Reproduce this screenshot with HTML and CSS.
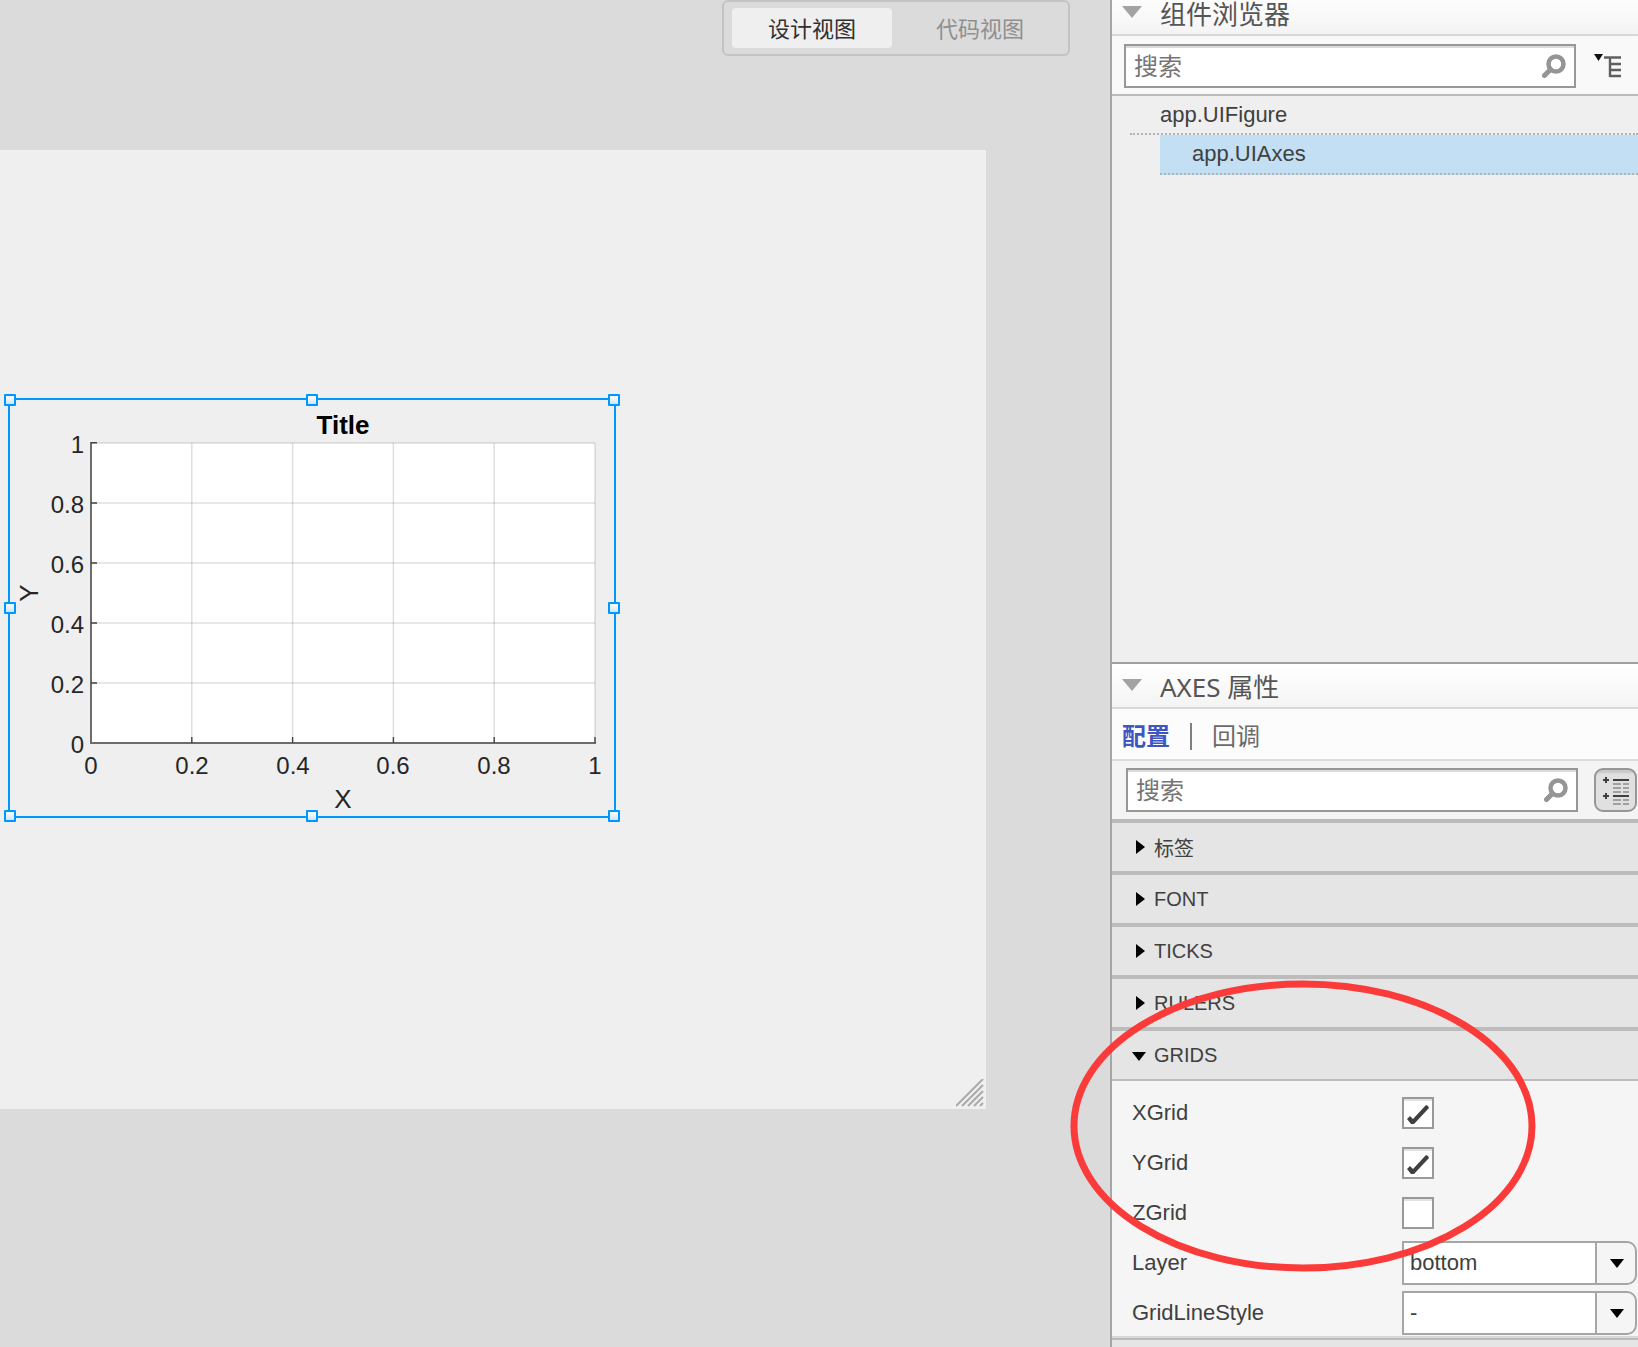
FILE: index.html
```html
<!DOCTYPE html>
<html lang="zh-CN">
<head>
<meta charset="utf-8">
<title>App Designer</title>
<link rel="stylesheet" href="styles.css">
</head>
<body>
<div class="app">
  <main class="workspace">
    <div class="view-switch">
      <button type="button" class="view-button view-button-active">设计视图</button>
      <button type="button" class="view-button">代码视图</button>
    </div>
    <div class="figure">
      <div class="axes">
        <svg class="plot" width="608" height="420" viewBox="8 398 608 420" role="img" aria-label="Title">
          <rect x="91" y="443" width="504" height="300" fill="#fff"/>
          <g stroke="#262626" stroke-opacity=".11" stroke-width="2">
            <path d="M92 443H595M92 503H595M92 563H595M92 623H595M92 683H595"/>
            <path stroke-opacity=".15" stroke-width="1.5" d="M191.800 443V742M292.600 443V742M393.400 443V742M494.200 443V742M595 443V742"/>
          </g>
          <path fill="none" stroke="#6c6c6c" stroke-width="2" d="M91 442V743H596"/>
          <path stroke="#444" stroke-width="1.4" d="M91 442.700H97M91 503H97M91 563H97M91 623H97M91 683H97M191.800 737V743M292.600 737V743M393.400 737V743M494.200 737V743M595 737V743"/>
          <g class="tick-text" text-anchor="end">
            <text x="84" y="453">1</text>
            <text x="84" y="513">0.8</text>
            <text x="84" y="573">0.6</text>
            <text x="84" y="633">0.4</text>
            <text x="84" y="693">0.2</text>
            <text x="84" y="753">0</text>
          </g>
          <g class="tick-text" text-anchor="middle">
            <text x="91" y="774">0</text>
            <text x="192" y="774">0.2</text>
            <text x="293" y="774">0.4</text>
            <text x="393" y="774">0.6</text>
            <text x="494" y="774">0.8</text>
            <text x="595" y="774">1</text>
          </g>
          <text class="axis-label" x="343" y="808" text-anchor="middle">X</text>
          <text class="axis-label" transform="translate(38 593) rotate(-90)" text-anchor="middle">Y</text>
          <text class="plot-title" x="343" y="434" text-anchor="middle">Title</text>
        </svg>
        <i class="handle top left"></i><i class="handle top center"></i><i class="handle top right"></i>
        <i class="handle middle left"></i><i class="handle middle right"></i>
        <i class="handle bottom left"></i><i class="handle bottom center"></i><i class="handle bottom right"></i>
      </div>
      <svg class="grip" width="28" height="28" viewBox="0 0 28 28" stroke="#aaa" stroke-width="2">
        <path d="M0 27L27 0M6 27L27 6M12 27L27 12M18 27L27 18M24 27L27 24"/>
      </svg>
    </div>
  </main>

  <aside class="sidebar">
    <section class="panel browser">
      <h2 class="panel-title"><svg width="20" height="12" viewBox="0 0 20 12"><path d="M0 0H20L10 12Z" fill="#a3a3a3"/></svg>组件浏览器</h2>
      <div class="search-row">
        <div class="search">
          <input type="search" placeholder="搜索" aria-label="搜索组件">
          <svg width="24" height="24" viewBox="0 0 24 24" fill="none" stroke="#959595"><circle cx="14" cy="10" r="7.5" stroke-width="4.5"/><path d="M8.500 15.500L2.500 21.500" stroke-width="5" stroke-linecap="round"/></svg>
        </div>
        <button type="button" class="tree-button" aria-label="树视图">
          <svg width="28" height="24" viewBox="0 0 28 24"><path d="M0 0H9L4.500 7Z" fill="#111"/><path d="M10 3.500H27M16 3.500V23M16 10H27M16 16H27M16 22H27" fill="none" stroke="#606060" stroke-width="2.4"/></svg>
        </button>
      </div>
      <ul class="tree">
        <li class="tree-item">app.UIFigure</li>
        <li class="tree-item tree-child">app.UIAxes</li>
      </ul>
    </section>

    <section class="panel properties">
      <h2 class="panel-title"><svg width="20" height="12" viewBox="0 0 20 12"><path d="M0 0H20L10 12Z" fill="#a3a3a3"/></svg>AXES 属性</h2>
      <nav class="tabs">
        <button type="button" class="tab tab-active">配置</button>
        <button type="button" class="tab">回调</button>
      </nav>
      <div class="search-row property-search">
        <div class="search">
          <input type="search" placeholder="搜索" aria-label="搜索属性">
          <svg width="24" height="24" viewBox="0 0 24 24" fill="none" stroke="#959595"><circle cx="14" cy="10" r="7.5" stroke-width="4.5"/><path d="M8.500 15.500L2.500 21.500" stroke-width="5" stroke-linecap="round"/></svg>
        </div>
        <button type="button" class="group-button" aria-label="分组视图">
          <svg width="28" height="30" viewBox="0 0 28 30"><path d="M1 5H7M4 2V8M1 21H7M4 18V24M11 5H27M11 21H27" stroke="#3f3f3f" stroke-width="2"/><path d="M11 9H19M21 9H27M11 13H19M21 13H27M11 17H19M21 17H27M11 25H19M21 25H27M11 29H19M21 29H27" stroke="#a0a0a0" stroke-width="2"/></svg>
        </button>
      </div>
      <button type="button" class="group"><svg width="16" height="14" viewBox="0 0 16 14"><path d="M4 0L13 7L4 14Z"/></svg>标签</button>
      <button type="button" class="group"><svg width="16" height="14" viewBox="0 0 16 14"><path d="M4 0L13 7L4 14Z"/></svg>FONT</button>
      <button type="button" class="group"><svg width="16" height="14" viewBox="0 0 16 14"><path d="M4 0L13 7L4 14Z"/></svg>TICKS</button>
      <button type="button" class="group"><svg width="16" height="14" viewBox="0 0 16 14"><path d="M4 0L13 7L4 14Z"/></svg>RULERS</button>
      <button type="button" class="group group-open" aria-expanded="true"><svg width="16" height="14" viewBox="0 0 16 14"><path d="M0 4H14L7 13Z"/></svg>GRIDS</button>
      <div class="fields">
        <div class="field"><label for="xgrid">XGrid</label><input id="xgrid" type="checkbox" checked></div>
        <div class="field"><label for="ygrid">YGrid</label><input id="ygrid" type="checkbox" checked></div>
        <div class="field"><label for="zgrid">ZGrid</label><input id="zgrid" type="checkbox"></div>
        <div class="field"><label for="layer">Layer</label>
          <div class="dropdown"><select id="layer"><option>bottom</option><option>top</option></select><svg width="14" height="9" viewBox="0 0 14 9"><path d="M0 0H14L7 9Z"/></svg></div>
        </div>
        <div class="field"><label for="linestyle">GridLineStyle</label>
          <div class="dropdown"><select id="linestyle"><option>-</option><option>--</option></select><svg width="14" height="9" viewBox="0 0 14 9"><path d="M0 0H14L7 9Z"/></svg></div>
        </div>
      </div>
      <div class="next-group"></div>
      <svg class="annotation" width="466" height="292" viewBox="0 0 466 292"><ellipse cx="233" cy="146" rx="229" ry="142" fill="none" stroke="#fb3b3a" stroke-width="7"/></svg>
    </section>
  </aside>
</div>
</body>
</html>
```
FILE: styles.css
```css
* { box-sizing: border-box; }

body {
  margin: 0;
  font-family: "Liberation Sans", "Noto Sans CJK SC", sans-serif;
  font-size: 22px;
  color: #404040;
}

button, input, select {
  font: inherit;
  color: inherit;
  margin: 0;
}

button {
  border: 0;
  padding: 0;
  background: none;
}

svg { display: block; flex: none; }

.app {
  display: grid;
  grid-template-columns: minmax(0, 1fr) 528px;
  grid-template-rows: minmax(0, 1fr);
  height: 100vh;
  overflow: hidden;
}

/* Design canvas */
.workspace {
  display: flex;
  flex-direction: column;
  gap: 94px;
  background: #dbdbdb;
}

.view-switch {
  display: flex;
  align-self: flex-end;
  gap: 8px;
  height: 56px;
  margin-right: 40px;
  padding: 6px 8px;
  border: 2px solid #c4c4c4;
  border-radius: 6px;
}

.view-button {
  width: 160px;
  height: 40px;
  padding-bottom: 3px;
  border-radius: 4px;
  color: #8f8f8f;
}

.view-button-active {
  background: #efefef;
  color: #303030;
}

.figure {
  position: relative;
  height: 959px;
  margin-right: 124px;
  background: #efefef;
}

.axes {
  position: absolute;
  left: 8px;
  top: 248px;
  outline: 2px solid #0098ff;
  outline-offset: -2px;
}

.tick-text { font-size: 24px; fill: #262626; }
.axis-label { font-size: 26px; fill: #262626; }
.plot-title { font-size: 26px; font-weight: bold; fill: #000; }

.handle {
  position: absolute;
  width: 12px;
  height: 12px;
  border: 2px solid #0098ff;
  border-radius: 1px;
  background: linear-gradient(#fff, #cfe3fb);
}

.top { top: -4px; }
.middle { top: 204px; }
.bottom { bottom: -4px; }
.left { left: -4px; }
.center { left: 298px; }
.right { right: -4px; }

.grip {
  position: absolute;
  right: 2px;
  bottom: 2px;
}

/* Sidebar */
.sidebar {
  display: grid;
  grid-template-rows: minmax(0, 662fr) minmax(0, 685fr);
  border-left: 2px solid #a6a6a6;
  background: #efefef;
}

.browser { overflow: hidden; }

.browser .panel-title { margin-top: -9px; }

.properties {
  position: relative;
  border-top: 2px solid #a0a0a0;
}

.panel-title {
  display: flex;
  align-items: center;
  gap: 18px;
  height: 45px;
  margin: 0;
  padding: 2px 10px 0;
  border-bottom: 2px solid #d8d8d8;
  background: linear-gradient(#fff, #f4f4f4);
  font-family: "Noto Sans", "Noto Sans CJK SC", sans-serif;
  font-size: 26px;
  font-weight: 400;
  line-height: 36px;
  color: #555;
}

.panel-title svg { margin-bottom: 4px; }

.search-row {
  display: flex;
  align-items: center;
  gap: 18px;
  height: 60px;
  padding: 2px 0 0 12px;
  border-bottom: 2px solid #bababa;
  background: #f9f9f9;
}

.property-search {
  gap: 16px;
  height: 62px;
  padding: 0 0 0 14px;
  border-bottom-width: 4px;
  background: #f4f4f4;
}

.search {
  display: flex;
  align-items: center;
  width: 452px;
  height: 44px;
  padding: 0 8px;
  border: 2px solid #979797;
  background: linear-gradient(#dcdcdc 2px, #fff 2px);
}

.search input {
  flex: 1;
  min-width: 0;
  height: 40px;
  padding: 2px 0 0;
  border: 0;
  outline: 0;
  background: none;
  font-size: 24px;
}

.search input::placeholder { color: #757575; }

.group-button {
  display: grid;
  place-items: center;
  width: 43px;
  height: 44px;
  border: 2px solid #979797;
  border-radius: 9px;
  background: linear-gradient(#c9c9c9 2px, #e0e0e0 4px);
}

.tree {
  margin: 0;
  padding: 0 0 0 18px;
  list-style: none;
}

.tree-item {
  height: 39px;
  padding-left: 30px;
  border-bottom: 2px dotted #b3b3b3;
  line-height: 37px;
}

.tree-child {
  height: 40px;
  margin-left: 30px;
  padding-left: 32px;
  background: #c2dff4;
}

.tabs {
  display: flex;
  align-items: center;
  height: 52px;
  padding: 4px 10px 0;
  border-bottom: 2px solid #dcdcdc;
  background: #fcfcfc;
}

.tab {
  font-size: 24px;
  line-height: 27px;
  color: #6a6a6a;
}

.tab + .tab {
  margin-left: 20px;
  padding-left: 20px;
  border-left: 2px solid #808080;
}

.tab-active {
  font-weight: bold;
  color: #3f56c0;
}

.group {
  display: flex;
  align-items: center;
  gap: 6px;
  width: 100%;
  height: 52px;
  padding-left: 20px;
  border-bottom: 4px solid #bcbcbc;
  background: #e5e5e5;
  font-size: 20px;
}

.group svg { fill: #000; }

.group-open {
  height: 50px;
  border-bottom-width: 2px;
}

.fields {
  display: grid;
  gap: 6px;
  padding: 10px 0 1px 20px;
  background: #f5f5f5;
}

.field {
  display: grid;
  grid-template-columns: 270px 235px;
  align-items: center;
  height: 44px;
}

.field input {
  appearance: none;
  width: 32px;
  height: 32px;
  border: 2px solid #999;
  background: linear-gradient(#e2e2e2 2px, #fff 2px);
}

.field input:checked::before {
  content: "";
  display: block;
  width: 28px;
  height: 28px;
  background: #404040;
  clip-path: polygon(3px 20px, 6px 17px, 9px 20px, 22px 6px, 24px 7px, 25px 9px, 10px 25px, 7px 25px);
}

.dropdown {
  display: grid;
  grid-template-columns: minmax(0, 1fr) 14px;
  align-items: center;
  padding-right: 13px;
}

.dropdown select {
  grid-area: 1 / 1;
  appearance: none;
  width: 235px;
  height: 44px;
  padding: 0 48px 2px 6px;
  border: 2px solid #a6a6a6;
  border-radius: 0 10px 10px 0;
  background: linear-gradient(90deg, #fff 191px, #a6a6a6 191px 193px, #f5f5f5 193px);
}

.dropdown svg { grid-area: 1 / 2; z-index: 1; pointer-events: none; }

.next-group {
  height: 52px;
  border-top: 2px solid #d8d8d8;
  background: linear-gradient(#bcbcbc 2px, #e5e5e5 2px);
}

.annotation {
  position: absolute;
  left: -42px;
  top: 316px;
  pointer-events: none;
}
```
